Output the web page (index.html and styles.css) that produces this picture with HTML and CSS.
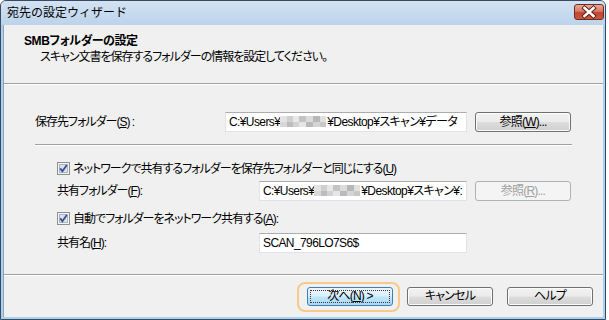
FILE: index.html
```html
<!DOCTYPE html>
<html lang="ja">
<head>
<meta charset="utf-8">
<title>宛先の設定ウィザード</title>
<link rel="stylesheet" href="styles.css">
</head>
<body>
<div class="window">
  <div class="titlebar">
    <span class="title">宛先の設定ウィザード</span>
    <span class="close">
      <svg width="30" height="16" viewBox="0 0 30 16">
        <path d="M10.5 4 L19.5 12 M19.5 4 L10.5 12" stroke="#5a1e16" stroke-width="4.4" stroke-linecap="square" fill="none"/>
        <path d="M10.5 4 L19.5 12 M19.5 4 L10.5 12" stroke="#ffffff" stroke-width="2.6" stroke-linecap="square" fill="none"/>
      </svg>
    </span>
  </div>
  <div class="client">
    <div class="header">
      <div class="h-title">SMBフォルダーの設定</div>
      <div class="h-sub">スキャン文書を保存するフォルダーの情報を設定してください。</div>
    </div>
    <div class="body">
      <div class="row">
        <span class="lbl lbl-main">保存先フォルダー(<u>S</u>) :</span>
        <div class="field field-wide">C:¥Users¥<span class="mosaic"></span>¥Desktop¥スキャン¥データ</div>
        <button class="btn">参照(<u>W</u>)...</button>
      </div>
      <div class="sep"></div>
      <div class="sub">
        <div class="check-row">
          <span class="cb"><svg width="13" height="13" viewBox="0 0 13 13"><rect x="0.5" y="0.5" width="12" height="12" fill="#f4f4f4" stroke="#8e8f8f"/><rect x="2.5" y="2.5" width="8" height="8" fill="#d9e1ec" stroke="#a9b6c9"/><path d="M3.2 6.4 L5.4 9.2 L9.8 3" stroke="#3d4f86" stroke-width="1.8" fill="none"/></svg></span>
          <span class="ctext">ネットワークで共有するフォルダーを保存先フォルダーと同じにする(<u>U</u>)</span>
        </div>
        <div class="row row-share">
          <span class="lbl lbl-sub">共有フォルダー(<u>F</u>):</span>
          <div class="field field-narrow">C:¥Users¥<span class="mosaic"></span>¥Desktop¥スキャン¥:</div>
          <button class="btn btn-disabled" disabled>参照(<u>R</u>)...</button>
        </div>
        <div class="check-row check2">
          <span class="cb"><svg width="13" height="13" viewBox="0 0 13 13"><rect x="0.5" y="0.5" width="12" height="12" fill="#f4f4f4" stroke="#8e8f8f"/><rect x="2.5" y="2.5" width="8" height="8" fill="#d9e1ec" stroke="#a9b6c9"/><path d="M3.2 6.4 L5.4 9.2 L9.8 3" stroke="#3d4f86" stroke-width="1.8" fill="none"/></svg></span>
          <span class="ctext">自動でフォルダーをネットワーク共有する(<u>A</u>):</span>
        </div>
        <div class="row row-name">
          <span class="lbl lbl-sub">共有名(<u>H</u>):</span>
          <div class="field field-narrow">SCAN_796LO7S6$</div>
        </div>
      </div>
    </div>
    <div class="footer">
      <button class="btn fbtn btn-default">次へ(<u>N</u>) &gt;</button>
      <button class="btn fbtn">キャンセル</button>
      <button class="btn fbtn">ヘルプ</button>
    </div>
  </div>
</div>
</body>
</html>
```
FILE: styles.css
```css
* { box-sizing: border-box; }
html, body { margin: 0; padding: 0; background: #ffffff; }
body {
  font-family: "Liberation Sans", "Noto Sans CJK JP", sans-serif;
  font-size: 12px;
  color: #000;
  font-feature-settings: "palt";
  letter-spacing: -1px;
}
.window {
  width: 606px;
  height: 320px;
  border: 1px solid #3a4a60;
  border-radius: 6px 6px 0 0;
  background: #a9d0ec;
  padding: 0 2px 2px 2px;
  display: flex;
  flex-direction: column;
}
.titlebar {
  height: 24px;
  margin: 0 -2px;
  padding: 0 1px 0 6px;
  border-radius: 5px 5px 0 0;
  background: linear-gradient(#d3e2f3, #bcd3eb);
  display: flex;
  align-items: center;
  justify-content: space-between;
}
.title {
  font-size: 12px;
  font-feature-settings: normal;
  letter-spacing: 0;
  color: #000;
  line-height: 14px;
}
.close {
  width: 30px;
  height: 16px;
  margin-top: -3px;
  border: 1px solid #6e2d24;
  border-radius: 3px;
  background: linear-gradient(#e9a899 0%, #d57a66 45%, #c2452f 55%, #c65a3e 100%);
  display: flex;
  align-items: center;
  justify-content: center;
}
.close svg { display: block; margin: -1px; }
.client {
  flex: 1;
  background: #f0f0f0;
  border-left: 1px solid #8ea3bd;
  display: flex;
  flex-direction: column;
}
.header {
  height: 59px;
  border-bottom: 1px solid #a0a0a0;
  box-shadow: 0 1px 0 #ffffff;
  padding-top: 9px;
}
.h-title {
  padding-left: 20px;
  font-weight: bold;
  line-height: 14px;
  letter-spacing: -0.4px;
}
.h-sub {
  padding-left: 36px;
  margin-top: 2px;
  line-height: 14px;
}
.body {
  flex: 1;
  padding: 28px 31px 0 31px;
}
.row {
  display: flex;
  align-items: center;
  height: 20px;
}
.lbl { line-height: 14px; white-space: nowrap; }
.lbl-main { width: 190px; }
.lbl-sub { width: 202px; }
.field {
  height: 20px;
  background: #fff;
  border: 1px solid #e2e3ea;
  border-top-color: #abadb3;
  padding: 0 3px;
  line-height: 18px;
  white-space: nowrap;
  overflow: hidden;
  letter-spacing: -0.6px;
}
.field-wide { width: 242px; }
.field-narrow { width: 208px; }
.mosaic {
  display: inline-block;
  width: 46px;
  height: 11px;
  vertical-align: -1px;
  margin-right: 1px;
  background:
    linear-gradient(90deg, #e4e4e4 0 7px, #cfcfcf 7px 13px, #e8e8e8 13px 19px, #c4c4c4 19px 26px, #dcdcdc 26px 33px, #b8b8b8 33px 40px, #e0e0e0 40px 46px) top / 46px 6px no-repeat,
    linear-gradient(90deg, #d8d8d8 0 7px, #bdbdbd 7px 13px, #d2d2d2 13px 19px, #e6e6e6 19px 26px, #bababa 26px 33px, #d4d4d4 33px 40px, #c8c8c8 40px 46px) bottom / 46px 5px no-repeat;
}
.btn {
  font: inherit;
  font-feature-settings: "palt";
  letter-spacing: -0.8px;
  color: #000;
  width: 96px;
  height: 20px;
  margin-left: 8px;
  padding: 0;
  border: 1px solid #707070;
  border-radius: 3px;
  background: linear-gradient(#f2f2f2 0%, #ebebeb 48%, #dddddd 52%, #cfcfcf 100%);
  box-shadow: inset 0 0 0 1px #fcfcfc;
  line-height: 16px;
  position: relative;
}
.btn-disabled {
  color: #a0a0a0;
  border-color: #adb2b5;
  background: #f4f4f4;
  box-shadow: none;
}
.sep {
  margin-top: 12px;
  height: 1px;
  background: #a0a0a0;
  box-shadow: 0 1px 0 #ffffff;
}
.sub { padding-left: 22px; }
.check-row {
  margin-top: 17px;
  height: 13px;
  display: flex;
  align-items: center;
}
.cb { width: 13px; height: 13px; display: block; }
.cb svg { display: block; }
.ctext { margin-left: 3px; line-height: 14px; white-space: nowrap; }
.row-share { margin-top: 6px; }
.check2 { margin-top: 11px; }
.row-name { margin-top: 8px; }
.footer {
  height: 43px;
  border-top: 1px solid #a0a0a0;
  box-shadow: inset 0 1px 0 #ffffff;
  display: flex;
  justify-content: flex-end;
  align-items: flex-start;
  padding: 12px 10px 0 0;
  gap: 14px;
}
.fbtn {
  width: 86px;
  height: 19px;
  margin-left: 0;
  line-height: 15px;
}
.btn-default {
  border-color: #3c7fb1;
  background: linear-gradient(#eaf6fd 0%, #d9f0fc 48%, #bee6fd 52%, #a7d9f5 100%);
  box-shadow: none;
}
.btn-default::before {
  content: "";
  position: absolute;
  left: 2px; right: 2px; top: 2px; bottom: 2px;
  border: 1px dotted #4a3030;
}
.btn-default::after {
  content: "";
  position: absolute;
  left: -11px; right: -8px; top: -6px; bottom: -7px;
  border: 2px solid #f8c988;
  border-radius: 8px;
}
```
